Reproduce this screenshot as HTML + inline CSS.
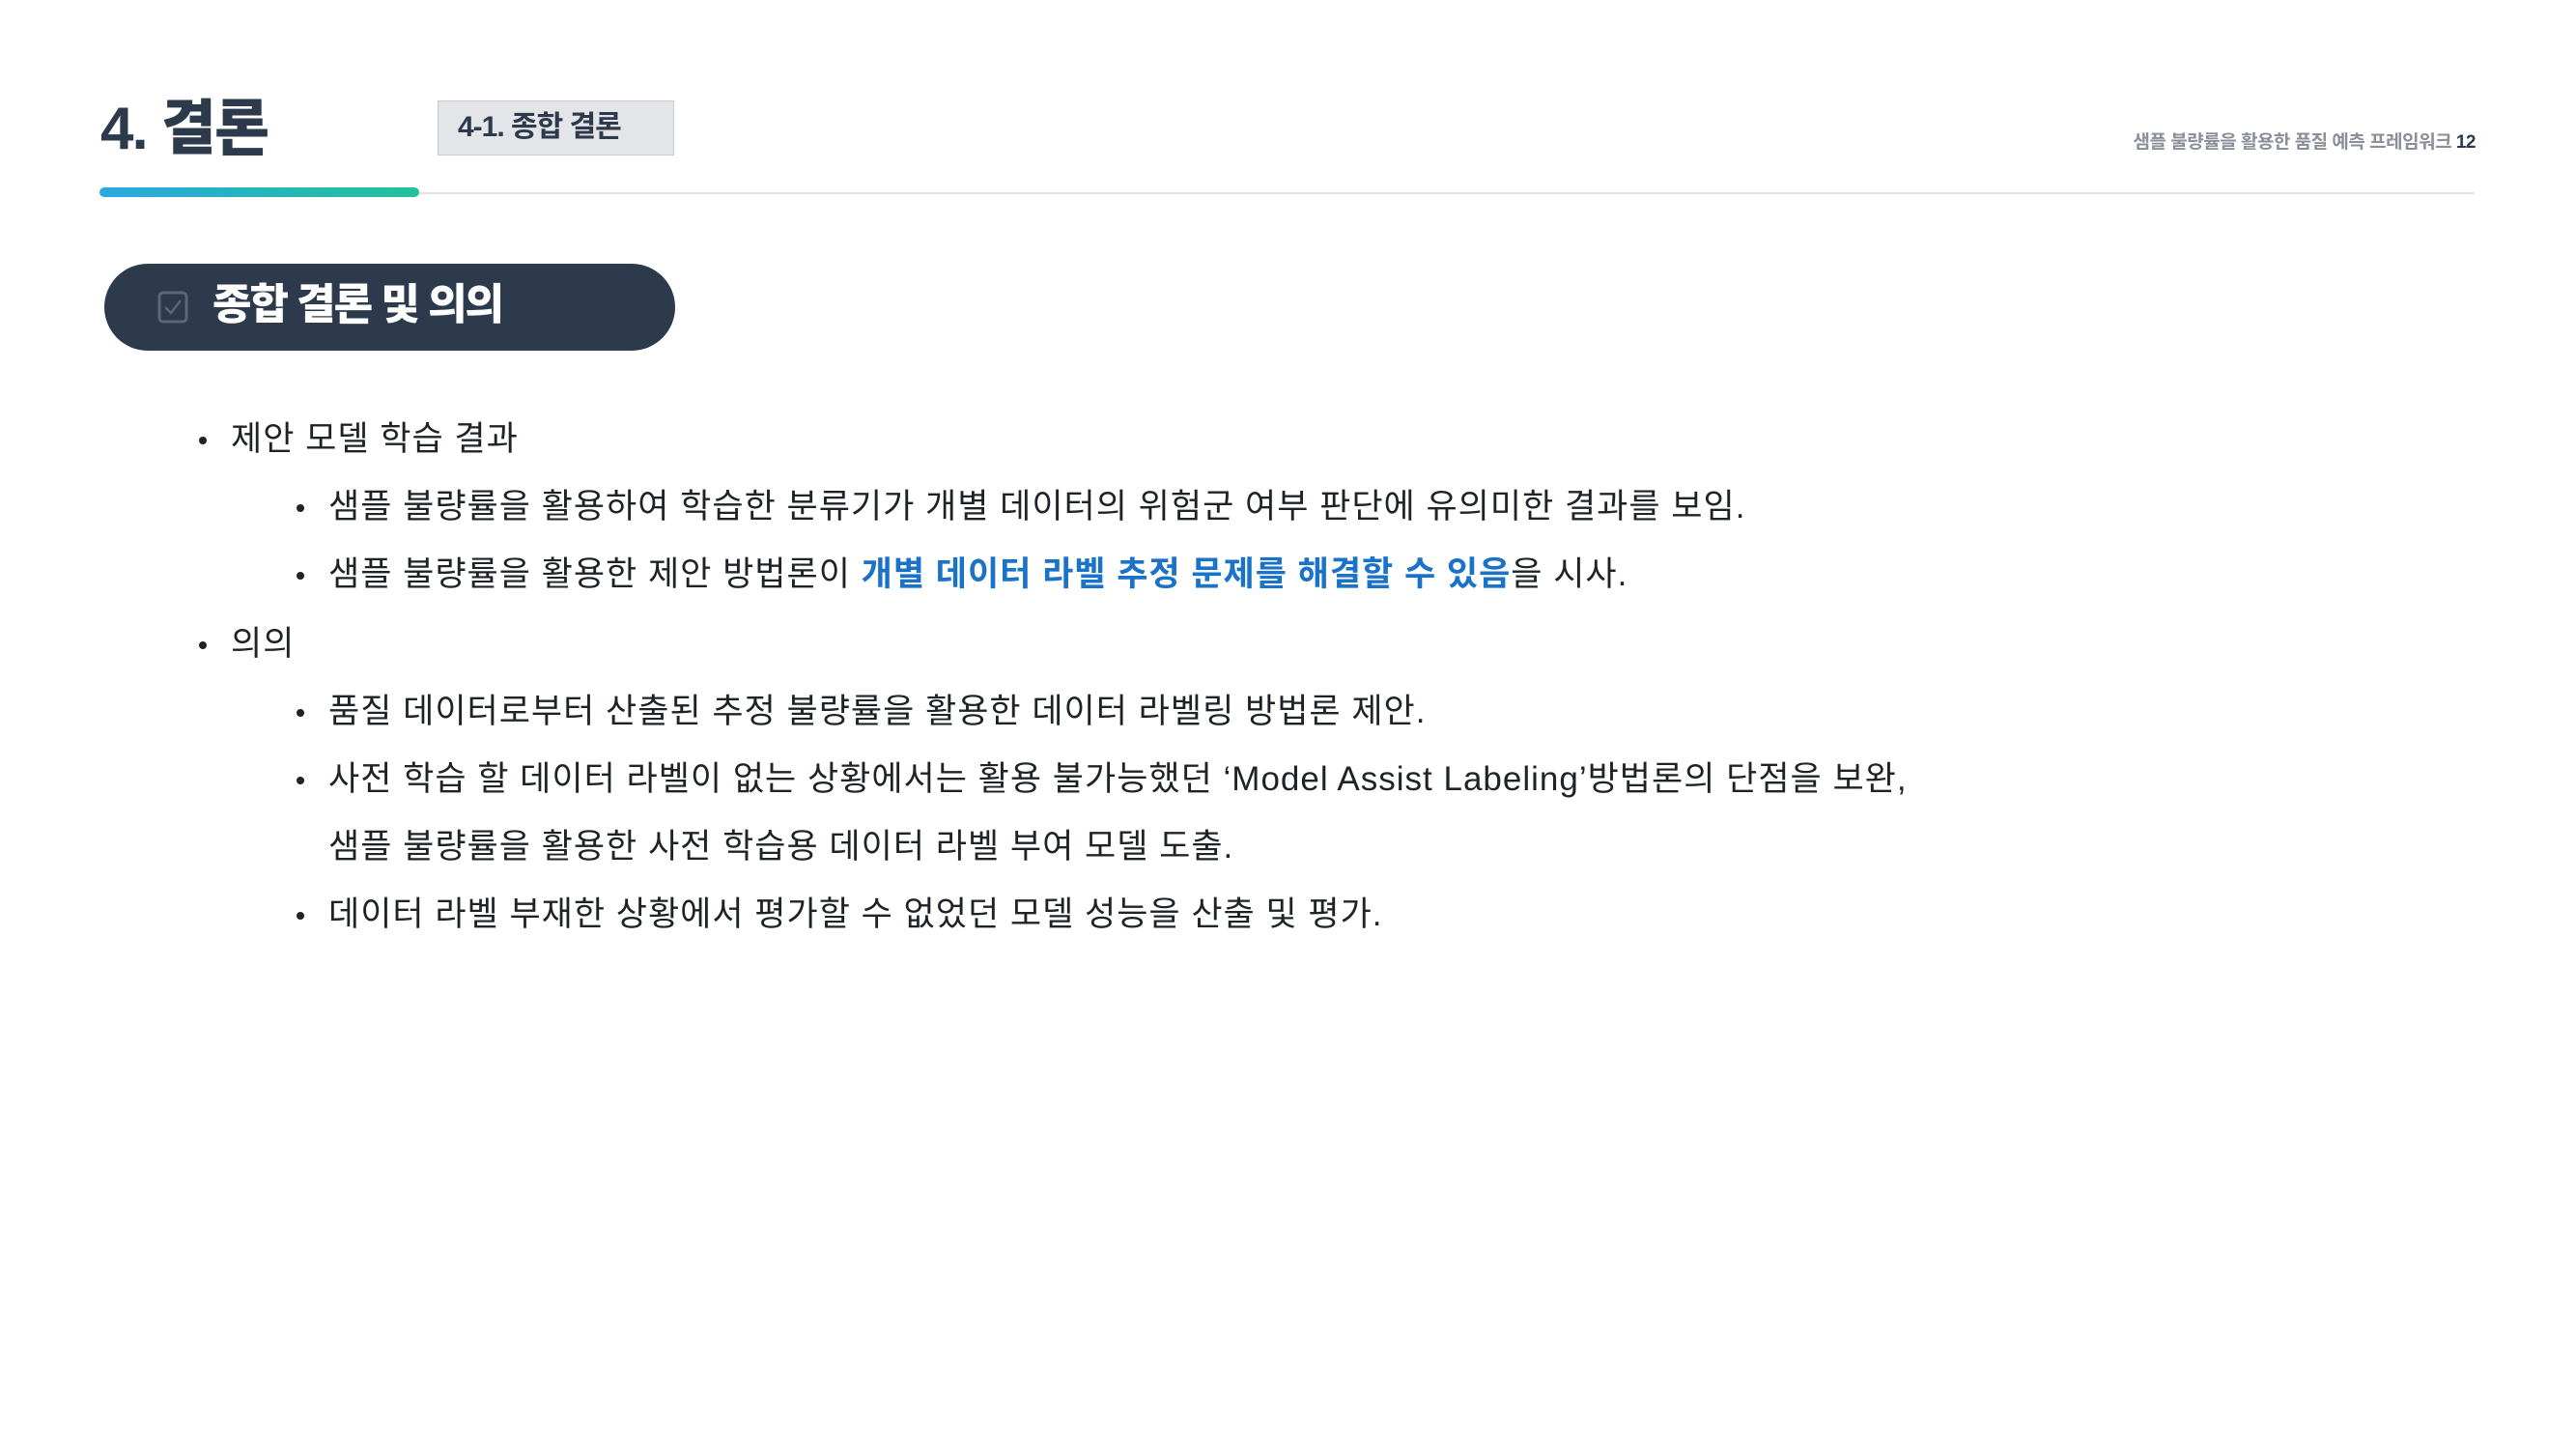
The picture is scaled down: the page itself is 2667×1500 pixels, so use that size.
<!DOCTYPE html>
<html><head><meta charset="utf-8"><style>
html,body{margin:0;padding:0;background:#fff;}
body{width:2667px;height:1500px;position:relative;overflow:hidden;font-family:"Liberation Sans","Noto Sans CJK KR",sans-serif;color:#1f2328;}
.abs{position:absolute;}
.title{left:104px;top:94px;font-size:62px;font-weight:900;color:#2c3a4b;letter-spacing:-2px;line-height:80px;}
.tag{left:453px;top:104px;width:245px;height:57px;background:#e4e5e9;border:1px solid #c9cbd0;box-sizing:border-box;font-size:30px;font-weight:700;color:#2c3a4b;line-height:53px;padding-left:20px;letter-spacing:-1px;}
.line{left:104px;top:199px;width:2458px;height:2px;background:#e2e2e2;}
.bar{left:103px;top:194px;width:331px;height:10px;border-radius:5px;background:linear-gradient(90deg,#2aa8e0,#22c29a);}
.right{right:104px;top:132px;font-size:19px;font-weight:700;color:#8a8f99;letter-spacing:-0.5px;}
.right b{color:#2c3a4b;}
.pill{left:108px;top:273px;width:591px;height:90px;border-radius:45px;background:#2c3a4b;}
.chk{left:163px;top:300px;width:32px;height:36px;}
.pilltxt{left:220px;top:286px;font-size:44px;font-weight:900;color:#fff;letter-spacing:-2px;line-height:60px;}
.row{position:absolute;font-size:35px;line-height:50px;letter-spacing:1px;white-space:nowrap;}
.row::before{content:"";position:absolute;left:-33px;top:22px;width:8px;height:8px;border-radius:50%;background:#1f2328;}
.l1{left:239px;}.l2{left:340px;}
.blue{color:#1a73c8;font-weight:700;}
.nob::before{display:none;}
</style></head><body>
<div class="abs title">4. 결론</div>
<div class="abs tag">4-1. 종합 결론</div>
<div class="abs right">샘플 불량률을 활용한 품질 예측 프레임워크 <b>12</b></div>
<div class="abs line"></div>
<div class="abs bar"></div>
<div class="abs pill"></div>
<svg class="abs chk" viewBox="0 0 32 36"><rect x="2" y="3" width="28" height="30" rx="4" fill="none" stroke="#5b6676" stroke-width="3"/><path d="M8 18 L14 24 L24 11" fill="none" stroke="#5b6676" stroke-width="2.5"/></svg>
<div class="abs pilltxt">종합 결론 및 의의</div>
<div class="row l1" style="top:430px">제안 모델 학습 결과</div>
<div class="row l2" style="top:500px">샘플 불량률을 활용하여 학습한 분류기가 개별 데이터의 위험군 여부 판단에 유의미한 결과를 보임.</div>
<div class="row l2" style="top:570px">샘플 불량률을 활용한 제안 방법론이 <span class="blue">개별 데이터 라벨 추정 문제를 해결할 수 있음</span>을 시사.</div>
<div class="row l1" style="top:642px">의의</div>
<div class="row l2" style="top:712px">품질 데이터로부터 산출된 추정 불량률을 활용한 데이터 라벨링 방법론 제안.</div>
<div class="row l2" style="top:782px">사전 학습 할 데이터 라벨이 없는 상황에서는 활용 불가능했던 ‘Model Assist Labeling’방법론의 단점을 보완,</div>
<div class="row l2 nob" style="top:852px">샘플 불량률을 활용한 사전 학습용 데이터 라벨 부여 모델 도출.</div>
<div class="row l2" style="top:922px">데이터 라벨 부재한 상황에서 평가할 수 없었던 모델 성능을 산출 및 평가.</div>
</body></html>
